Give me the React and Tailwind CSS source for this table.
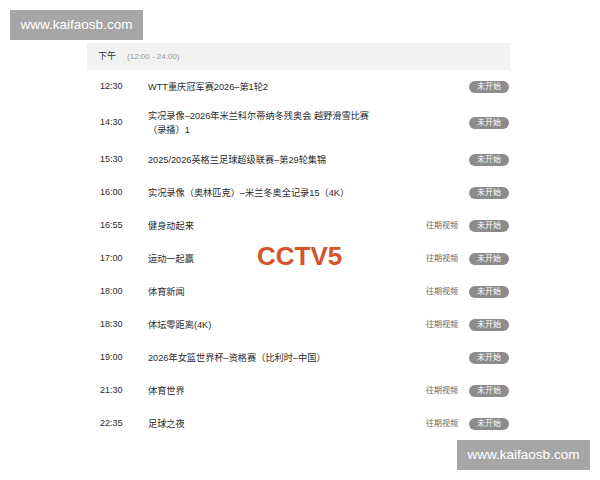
import React from 'react';

const programs = [
  { time: '12:30', title: 'WTT重庆冠军赛2026–第1轮2', replay: false },
  { time: '14:30', title: '实况录像–2026年米兰科尔蒂纳冬残奥会 越野滑雪比赛（录播）1', replay: false, tall: true },
  { time: '15:30', title: '2025/2026英格兰足球超级联赛–第29轮集锦', replay: false },
  { time: '16:00', title: '实况录像（奥林匹克）–米兰冬奥全记录15（4K）', replay: false },
  { time: '16:55', title: '健身动起来', replay: true },
  { time: '17:00', title: '运动一起赢', replay: true },
  { time: '18:00', title: '体育新闻', replay: true },
  { time: '18:30', title: '体坛零距离(4K)', replay: true },
  { time: '19:00', title: '2026年女篮世界杯–资格赛（比利时–中国）', replay: false },
  { time: '21:30', title: '体育世界', replay: true },
  { time: '22:35', title: '足球之夜', replay: true },
];

const font = { fontFamily: '"Liberation Sans", "Noto Sans CJK SC", sans-serif' };

const Watermark = ({ className }) => (
  <div className={`absolute flex items-center justify-center w-[133px] h-[30px] bg-[#a6a6a6] text-white text-[13.5px] ${className}`}>
    www.kaifaosb.com
  </div>
);

const App = () => {
  return (
    <div className="relative w-[600px] h-[480px] bg-white overflow-hidden" style={font}>
      <Watermark className="left-[10px] top-[10px]" />

      <div className="absolute left-[87px] top-[43px] w-[423px]">
        {/* 时段标题 */}
        <div className="flex items-center h-[27px] bg-[#f2f2f2] pl-[11px]">
          <span className="text-[9px] text-[#333]">下午</span>
          <span className="ml-[11px] text-[8px] text-[#999]">(12:00 - 24:00)</span>
        </div>

        {programs.map((p) => (
          <div key={p.time} className={`flex items-center pl-[13px] pr-[1px] ${p.tall ? 'h-[40px]' : 'h-[33px]'}`}>
            <div className="w-[48px] text-[9px] text-[#2b2b2b]">{p.time}</div>
            <div className="w-[226px] text-[9.2px] leading-[14px] text-[#2b2b2b]">{p.title}</div>
            <div className="flex-1 flex items-center justify-end">
              {p.replay && <span className="mr-[11px] text-[8px] text-[#666]">往期视频</span>}
              <span className="flex items-center justify-center w-[40px] h-[12px] rounded-full bg-[#8c8c8c] text-white text-[8px]">
                未开始
              </span>
            </div>
          </div>
        ))}
      </div>

      <div className="absolute left-[257px] top-[241px] text-[26px] font-bold text-[#d6532b] leading-[30px]">
        CCTV5
      </div>

      <Watermark className="left-[457px] top-[440px]" />
    </div>
  );
};

export default App;
